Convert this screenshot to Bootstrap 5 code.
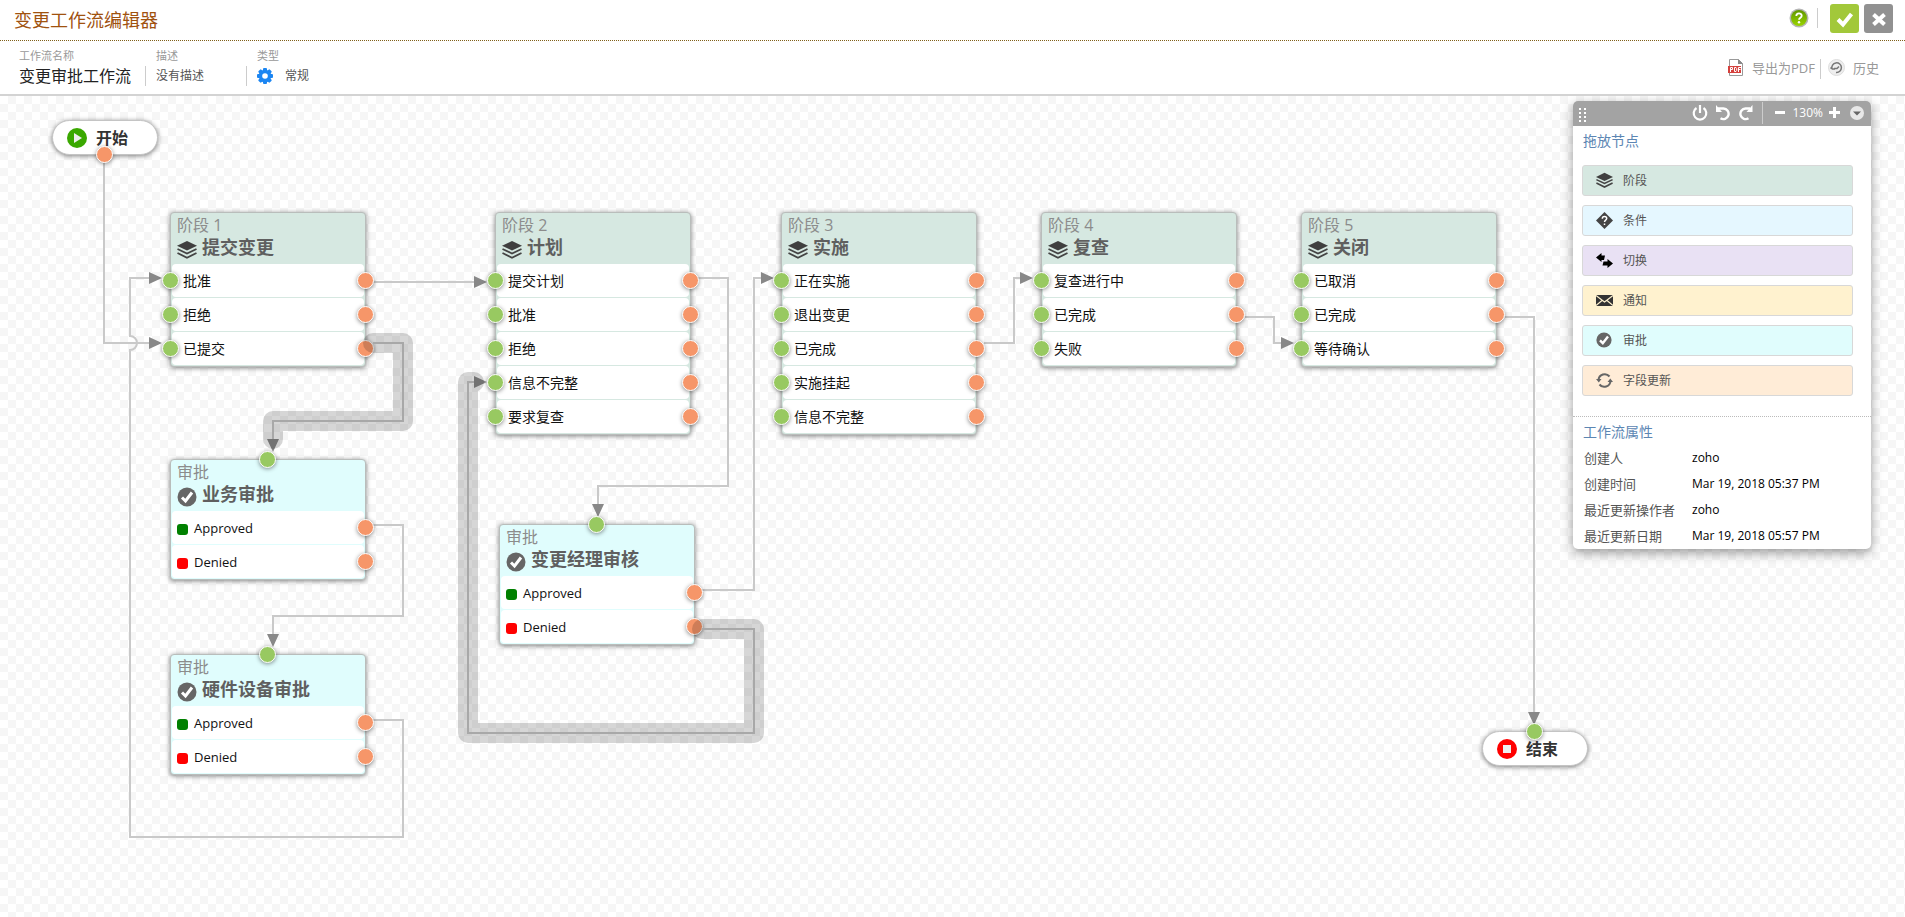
<!DOCTYPE html>
<html lang="zh-CN">
<head>
<meta charset="utf-8">
<meta name="viewport" content="width=device-width, initial-scale=1">
<title>变更工作流编辑器</title>
<link href="https://cdn.jsdelivr.net/npm/bootstrap@5.3.0/dist/css/bootstrap.min.css" rel="stylesheet">
<style>
  body { font-family: "Open Sans", "Noto Sans CJK SC", sans-serif; font-size: 12px; line-height: 16px; color: #555; min-height: 100vh; }
  .topbar { height: 41px; border-bottom: 1px dotted #80601a; padding: 0 12px 0 14px; }
  .topbar h1 { font-size: 18px; line-height: 24px; color: #a0520f; font-weight: 400; }
  .sq-btn { width: 29px; height: 29px; border: 0; border-radius: 3px; }
  .sq-ok { background: #a2c83a; }
  .sq-no { background: #919191; margin-left: 5px; }
  .vline { width: 1px; height: 20px; background: #ccc; }
  .infobar { height: 55px; border-bottom: 2px solid #d3d3d3; padding: 7px 26px 0 19px; }
  .infobar .vline { margin-top: 18px; margin-right: 10px; }
  .infobar .wf-title { margin-right: 14px; }
  .wf-desc { width: 90px; }
  .cap { font-size: 11px; color: #999; }
  .wf-name { font-size: 16px; line-height: 24px; color: #222; }
  .wf-val { font-size: 12px; line-height: 24px; color: #555; }
  .tools { margin-top: 11px; }
  .infobar .tools .vline { margin: 0 7px 0 5px; }
  .tool-link { font-size: 13px; color: #999; text-decoration: none; gap: 8px; }
  .board { min-height: 700px; background: repeating-conic-gradient(#f6f6f6 0 25%, #fff 0 50%) 0 0 / 16px 16px; }
  .wires { left: 0; top: 0; pointer-events: none; }
  .wires.over { z-index: 2; }
  .node { position: absolute; width: 196px; border: 1px solid #b9bdbb; border-radius: 4px; box-shadow: 0 1px 5px rgba(0,0,0,.5); padding: 0 1px 1px; }
  .stage { background: #d6e8e1; }
  .approve { background: #e0fdfd; }
  .node-head { height: 51px; padding: 0 5px; }
  .node-kind { font-size: 16px; line-height: 24px; color: #8c8c8c; }
  .node-name { font-size: 18px; line-height: 20px; font-weight: 700; color: #5f5f5f; gap: 5px; }
  .node-name svg { margin-top: 3px; }
  .state { position: relative; height: 33px; margin-bottom: 1px; background: #fff; border-radius: 4px; padding: 0 11px; font-size: 14px; color: #111; }
  .state:last-child { margin-bottom: 0; }
  .approve .state { padding: 0 5px; font-size: 13px; gap: 6px; }
  .port { position: absolute; width: 17px; height: 17px; border-radius: 50%; border: 1px solid #fff; box-shadow: 0 1px 4px rgba(0,0,0,.45); }
  .port-in { background: #98c961; }
  .port-out { background: #f69669; }
  .state .port { top: 8px; }
  .state .port-in { left: -10px; }
  .state .port-out { right: -10px; }
  .port-top { top: -9px; left: 50%; margin-left: -9px; }
  .port-bottom { bottom: -9px; left: 50%; margin-left: -9px; }
  .flag { width: 11px; height: 11px; border-radius: 3px; margin-top: 3px; }
  .flag-yes { background: #008000; }
  .flag-no { background: #f00; }
  .pill { position: absolute; width: 106px; height: 35px; border-radius: 18px; background: #fff; border: 1px solid #c4c4c4; box-shadow: 0 1px 5px rgba(0,0,0,.5); padding: 0 14px; gap: 9px; font-size: 16px; font-weight: 700; color: #333; }
  .palette { position: absolute; top: 5px; right: 34px; width: 298px; background: #fff; border-radius: 5px; box-shadow: 0 4px 12px rgba(0,0,0,.4); z-index: 3; overflow: hidden; }
  .palette-bar { height: 25px; background: #a3a3a3; color: #fff; padding: 0 7px 2px 6px; }
  .palette-bar button { background: none; border: 0; padding: 0; line-height: 0; }
  .history-tools { gap: 7px; padding-right: 8px; margin-right: 12px; border-right: 1px solid #ccc; height: 22px; }
  .zoom-tools { gap: 6px; margin-right: 10px; }
  .palette h2 { font-size: 14px; line-height: 20px; color: #5c86b3; font-weight: 400; margin: 0; padding: 5px 10px 0; }
  .tiles { padding: 14px 18px 20px 9px; gap: 9px; }
  .tile { height: 31px; border: 1px solid #d8d8d8; border-radius: 3px; font-size: 12px; color: #555; padding: 0 13px; gap: 10px; text-align: left; }
  .t1 { background: #d6e8e1; } .t2 { background: #e5f7ff; } .t3 { background: #e9e1f4; }
  .t4 { background: #fff2cf; } .t5 { background: #e0fdfd; } .t6 { background: #ffecd7; }
  .props { border-top: 1px dotted #bbb; }
  .props table { margin-top: 3px; }
  .props th, .props td { height: 26px; padding: 0; font-size: 13px; font-weight: 400; }
  .props th { width: 119px; padding-left: 11px; color: #555; }
  .props td { color: #000; font-size: 12px; }
</style>
</head>
<body class="d-flex flex-column bg-white">
<svg width="0" height="0" class="position-absolute" aria-hidden="true">
  <symbol id="i-layers" viewBox="0 0 20 20"><path fill="#3f3f3f" d="M10 1 20 5.800 10 10.500 0 5.800z"/><path fill="none" stroke="#444" stroke-width="1.800" d="M.5 9 10 13.500 19.500 9M.5 13 10 17.700 19.500 13"/></symbol>
  <symbol id="i-check" viewBox="0 0 20 20"><circle cx="10" cy="10" r="9.500" fill="#666"/><path fill="none" stroke="#fff" stroke-width="3" d="M5 10.500 8.500 14 15 5.500"/></symbol>
</svg>

<header class="topbar d-flex align-items-center justify-content-between">
  <h1 class="m-0 mb-1 mt-1">变更工作流编辑器</h1>
  <div class="d-flex align-items-center mb-1">
    <button type="button" class="btn p-0 border-0 lh-1" aria-label="帮助">
      <svg width="20" height="20" viewBox="0 0 20 20"><defs><linearGradient id="gh" x2="0" y2="1"><stop stop-color="#5f9600"/><stop offset="1" stop-color="#9ad500"/></linearGradient></defs><circle cx="10" cy="10" r="9.500" fill="#b5b5b5"/><circle cx="10" cy="10" r="8" fill="url(#gh)"/><path fill="none" stroke="#fff" stroke-width="1.800" d="M7.300 8c0-3.600 5.400-3.400 5.400-.3 0 2-2.700 2-2.700 4.100"/><circle cx="10" cy="14.200" r="1.200" fill="#fff"/></svg>
    </button>
    <span class="vline ms-2 me-2"></span>
    <button type="button" class="sq-btn sq-ok p-0 ms-1" aria-label="保存"><svg width="29" height="29" viewBox="0 0 29 29"><path fill="none" stroke="#fff" stroke-width="4" d="M8 15.500 13 20.500 21.500 10"/></svg></button>
    <button type="button" class="sq-btn sq-no p-0" aria-label="关闭"><svg width="29" height="29" viewBox="0 0 29 29"><path stroke="#fff" stroke-width="4" d="m9.500 10.500 11 10m0-10-11 10"/></svg></button>
  </div>
</header>

<section class="infobar d-flex justify-content-between">
  <div class="d-flex">
    <div class="wf-title"><div class="cap">工作流名称</div><div class="wf-name">变更审批工作流</div></div>
    <span class="vline"></span>
    <div class="wf-desc"><div class="cap">描述</div><div class="wf-val">没有描述</div></div>
    <span class="vline"></span>
    <div><div class="cap">类型</div>
      <div class="wf-val d-flex align-items-center"><svg class="me-2" width="16" height="16" viewBox="0 0 16 16"><g fill="#1c86f2"><g id="t"><rect x="6" width="4" height="16" rx="1"/><rect y="6" width="16" height="4" rx="1"/></g><use href="#t" transform="rotate(45 8 8)"/><circle cx="8" cy="8" r="6.300"/></g><circle cx="8" cy="8" r="2.800" fill="#fff"/></svg><span class="ms-1">常规</span></div></div>
  </div>
  <nav class="tools d-flex align-items-start" aria-label="工具">
    <a href="#" class="tool-link d-flex align-items-center"><svg width="16" height="17" viewBox="0 0 16 17"><path fill="#fff" stroke="#999" d="M1.500.5h9l4 4v12h-13z"/><path fill="#888" d="M10 0v5h5z"/><path fill="#d5403c" d="M0 7h13v7H0z"/><path fill="none" stroke="#fff" d="M2.500 13V8.500h2v2h-2M6.500 8.500v4h1.500l.7-1V9.500l-.7-1zM10.500 13V8.500H13M10.500 10.500h2"/></svg>导出为PDF</a>
    <span class="vline"></span>
    <a href="#" class="tool-link d-flex align-items-center"><svg width="17" height="17" viewBox="0 0 17 17"><circle cx="8.500" cy="8.500" r="8" fill="#eee" stroke="#ddd"/><path fill="none" stroke="#777" stroke-width="1.500" d="M4 10a4.800 4.800 0 1 1 4 3.400M4 10 2.500 8.500M4 10h3M6 9.500h3l2-2"/></svg>历史</a>
  </nav>
</section>

<main class="board position-relative flex-grow-1 overflow-hidden">
  <!-- plain connectors -->
  <svg class="wires position-absolute" width="1600" height="780" viewBox="0 96 1600 780" aria-hidden="true">
    <g fill="none" stroke="#c9c9c9" stroke-width="2">
      <path d="M104 163V343H150"/>
      <path d="M373 282H475"/>
      <path d="M150 278H130V336A7 7 0 0 1 130 350V837H403V720H373"/>
      <path d="M373 525H403V616H273V635"/>
      <path d="M698 278H728V486H598V505"/>
      <path d="M702 590H754V278H762"/>
      <path d="M984 343H1014V278H1021"/>
      <path d="M1245 317H1274V343H1282"/>
      <path d="M1505 317H1534V713"/>
    </g>
    <g fill="#888">
      <path d="M149 337v12l13-6zM474 276v12l13-6zM149 272v12l13-6zM761 272v12l13-6zM1020 272v12l13-6zM1281 337v12l13-6z"/>
      <path d="M267 634h12l-6 13zM592 504h12l-6 13zM1528 712h12l-6 13z"/>
    </g>
  </svg>

  <div class="pill d-flex align-items-center" style="left:52px;top:24px">
    <svg width="20" height="20" viewBox="0 0 20 20"><circle cx="10" cy="10" r="10" fill="#3aa800"/><path fill="#eee" d="M7 5 15 10 7 15z"/></svg>开始
    <span class="port port-out port-bottom"></span>
  </div>
  <div class="pill d-flex align-items-center" style="left:1482px;top:635px">
    <svg width="20" height="20" viewBox="0 0 20 20"><circle cx="10" cy="10" r="10" fill="#f00"/><path fill="#eee" d="M6 6h8v8H6z"/></svg>结束
    <span class="port port-in port-top"></span>
  </div>

  <article class="node stage" style="left:170px;top:116px">
    <div class="node-head"><div class="node-kind">阶段 1</div><div class="node-name d-flex align-items-start"><svg width="20" height="20"><use href="#i-layers"/></svg>提交变更</div></div>
    <div class="state d-flex align-items-center"><span class="port port-in"></span>批准<span class="port port-out"></span></div>
    <div class="state d-flex align-items-center"><span class="port port-in"></span>拒绝<span class="port port-out"></span></div>
    <div class="state d-flex align-items-center"><span class="port port-in"></span>已提交<span class="port port-out"></span></div>
  </article>

  <article class="node stage" style="left:495px;top:116px">
    <div class="node-head"><div class="node-kind">阶段 2</div><div class="node-name d-flex align-items-start"><svg width="20" height="20"><use href="#i-layers"/></svg>计划</div></div>
    <div class="state d-flex align-items-center"><span class="port port-in"></span>提交计划<span class="port port-out"></span></div>
    <div class="state d-flex align-items-center"><span class="port port-in"></span>批准<span class="port port-out"></span></div>
    <div class="state d-flex align-items-center"><span class="port port-in"></span>拒绝<span class="port port-out"></span></div>
    <div class="state d-flex align-items-center"><span class="port port-in"></span>信息不完整<span class="port port-out"></span></div>
    <div class="state d-flex align-items-center"><span class="port port-in"></span>要求复查<span class="port port-out"></span></div>
  </article>

  <article class="node stage" style="left:781px;top:116px">
    <div class="node-head"><div class="node-kind">阶段 3</div><div class="node-name d-flex align-items-start"><svg width="20" height="20"><use href="#i-layers"/></svg>实施</div></div>
    <div class="state d-flex align-items-center"><span class="port port-in"></span>正在实施<span class="port port-out"></span></div>
    <div class="state d-flex align-items-center"><span class="port port-in"></span>退出变更<span class="port port-out"></span></div>
    <div class="state d-flex align-items-center"><span class="port port-in"></span>已完成<span class="port port-out"></span></div>
    <div class="state d-flex align-items-center"><span class="port port-in"></span>实施挂起<span class="port port-out"></span></div>
    <div class="state d-flex align-items-center"><span class="port port-in"></span>信息不完整<span class="port port-out"></span></div>
  </article>

  <article class="node stage" style="left:1041px;top:116px">
    <div class="node-head"><div class="node-kind">阶段 4</div><div class="node-name d-flex align-items-start"><svg width="20" height="20"><use href="#i-layers"/></svg>复查</div></div>
    <div class="state d-flex align-items-center"><span class="port port-in"></span>复查进行中<span class="port port-out"></span></div>
    <div class="state d-flex align-items-center"><span class="port port-in"></span>已完成<span class="port port-out"></span></div>
    <div class="state d-flex align-items-center"><span class="port port-in"></span>失败<span class="port port-out"></span></div>
  </article>

  <article class="node stage" style="left:1301px;top:116px">
    <div class="node-head"><div class="node-kind">阶段 5</div><div class="node-name d-flex align-items-start"><svg width="20" height="20"><use href="#i-layers"/></svg>关闭</div></div>
    <div class="state d-flex align-items-center"><span class="port port-in"></span>已取消<span class="port port-out"></span></div>
    <div class="state d-flex align-items-center"><span class="port port-in"></span>已完成<span class="port port-out"></span></div>
    <div class="state d-flex align-items-center"><span class="port port-in"></span>等待确认<span class="port port-out"></span></div>
  </article>

  <article class="node approve" style="left:170px;top:363px">
    <span class="port port-in port-top"></span>
    <div class="node-head"><div class="node-kind">审批</div><div class="node-name d-flex align-items-start"><svg width="20" height="20"><use href="#i-check"/></svg>业务审批</div></div>
    <div class="state d-flex align-items-center"><span class="flag flag-yes"></span>Approved<span class="port port-out"></span></div>
    <div class="state d-flex align-items-center"><span class="flag flag-no"></span>Denied<span class="port port-out"></span></div>
  </article>

  <article class="node approve" style="left:170px;top:558px">
    <span class="port port-in port-top"></span>
    <div class="node-head"><div class="node-kind">审批</div><div class="node-name d-flex align-items-start"><svg width="20" height="20"><use href="#i-check"/></svg>硬件设备审批</div></div>
    <div class="state d-flex align-items-center"><span class="flag flag-yes"></span>Approved<span class="port port-out"></span></div>
    <div class="state d-flex align-items-center"><span class="flag flag-no"></span>Denied<span class="port port-out"></span></div>
  </article>

  <article class="node approve" style="left:499px;top:428px">
    <span class="port port-in port-top"></span>
    <div class="node-head"><div class="node-kind">审批</div><div class="node-name d-flex align-items-start"><svg width="20" height="20"><use href="#i-check"/></svg>变更经理审核</div></div>
    <div class="state d-flex align-items-center"><span class="flag flag-yes"></span>Approved<span class="port port-out"></span></div>
    <div class="state d-flex align-items-center"><span class="flag flag-no"></span>Denied<span class="port port-out"></span></div>
  </article>

  <!-- highlighted connectors, drawn over the nodes -->
  <svg class="wires over position-absolute" width="1600" height="780" viewBox="0 96 1600 780" aria-hidden="true">
    <g fill="none" stroke="#c9c9c9" stroke-width="2">
      <path d="M373 343H403V421H273V439"/>
      <path d="M702 629H754V733H468V382H474"/>
    </g>
    <path fill="#888" d="M267 439h12l-6 13zM474 376v12l13-6z"/>
    <g fill="none" stroke="#000" stroke-opacity=".16" stroke-width="20" stroke-linejoin="round" stroke-linecap="round">
      <path d="M373 343H403V421H273V439"/>
      <path d="M702 629H754V733H468V382H474"/>
    </g>
  </svg>

  <aside class="palette">
    <div class="palette-bar d-flex align-items-center">
      <svg class="mt-1 me-auto" width="7" height="16" viewBox="0 0 7 16"><path stroke="#fff" stroke-width="2" stroke-dasharray="2 2" d="M1 1v15M6 1v15"/></svg>
      <div class="history-tools d-flex align-items-center">
        <button type="button" aria-label="启用"><svg width="16" height="16" viewBox="0 0 16 16"><path fill="none" stroke="#fff" stroke-width="2.200" d="M4.500 3a6.300 6.300 0 1 0 7 0M8 0v8"/></svg></button>
        <button type="button" aria-label="撤销"><svg width="16" height="16" viewBox="0 0 16 16"><path fill="none" stroke="#fff" stroke-width="2.400" d="M3 3.500h5.500a5.300 5.300 0 1 1-3 9.800"/><path fill="#fff" d="M1 0v7h6z"/></svg></button>
        <button type="button" aria-label="重做"><svg width="16" height="16" viewBox="0 0 16 16"><path fill="none" stroke="#fff" stroke-width="2.400" d="M12 3.500H7.500a5.300 5.300 0 1 0 3 9.800"/><path fill="#fff" d="M14.500 0v7h-6z"/></svg></button>
      </div>
      <div class="zoom-tools d-flex align-items-center">
        <button type="button" aria-label="缩小"><svg width="11" height="11"><path stroke="#fff" stroke-width="3" d="M0 5.500h10"/></svg></button>
        <span>130%</span>
        <button type="button" aria-label="放大"><svg width="11" height="11"><path stroke="#fff" stroke-width="3" d="M0 5.500h11M5.500 0v11"/></svg></button>
      </div>
      <button type="button" aria-label="折叠"><svg width="14" height="14"><circle cx="7" cy="7" r="7" fill="#e8e8e8"/><path fill="#666" d="M3 5.500h8l-4 4z"/></svg></button>
    </div>
    <h2>拖放节点</h2>
    <div class="tiles d-flex flex-column">
      <button type="button" class="tile t1 d-flex align-items-center"><svg width="17" height="17"><use href="#i-layers"/></svg>阶段</button>
      <button type="button" class="tile t2 d-flex align-items-center"><svg width="17" height="17" viewBox="0 0 17 17"><path fill="#444" d="M8.500 0 17 8.500 8.500 17 0 8.500z"/><path fill="none" stroke="#fff" stroke-width="1.500" d="M6.300 6.800c0-3 4.400-2.800 4.400-.2 0 1.600-2.200 1.600-2.200 3.400M8.500 11.500v1.500"/></svg>条件</button>
      <button type="button" class="tile t3 d-flex align-items-center"><svg width="17" height="17" viewBox="0 0 17 17"><path d="M0 5.500 5.500 1v2.500H9L8 8H5.500v2zM17 11.500 11.500 7v2.500h-4l-1 4h5V16z"/></svg>切换</button>
      <button type="button" class="tile t4 d-flex align-items-center"><svg width="17" height="17" viewBox="0 0 17 17"><path fill="#333" d="M0 3h17v11H0z"/><path fill="none" stroke="#fff2cf" stroke-width="1.200" d="M0 3.500 8.500 10 17 3.500M0 13.500 6 8.500M17 13.500 11 8.500"/></svg>通知</button>
      <button type="button" class="tile t5 d-flex align-items-center"><svg width="17" height="17"><use href="#i-check" width="16" height="16"/></svg>审批</button>
      <button type="button" class="tile t6 d-flex align-items-center"><svg width="17" height="17" viewBox="0 0 17 17"><path fill="none" stroke="#666" stroke-width="2" d="M2.500 8a6.200 6.200 0 0 1 11-3.500M14.500 9a6.200 6.200 0 0 1-11 3.500"/><path fill="#666" d="M0 7h5.500L2.800 10.500zM11.500 10H17l-2.700-3.500z"/></svg>字段更新</button>
    </div>
    <div class="props">
      <h2>工作流属性</h2>
      <table class="w-100">
        <tbody>
          <tr><th scope="row">创建人</th><td>zoho</td></tr>
          <tr><th scope="row">创建时间</th><td>Mar 19, 2018 05:37 PM</td></tr>
          <tr><th scope="row">最近更新操作者</th><td>zoho</td></tr>
          <tr><th scope="row">最近更新日期</th><td>Mar 19, 2018 05:57 PM</td></tr>
        </tbody>
      </table>
    </div>
  </aside>
</main>
<script src="https://cdn.jsdelivr.net/npm/bootstrap@5.3.0/dist/js/bootstrap.bundle.min.js"></script>
</body>
</html>
